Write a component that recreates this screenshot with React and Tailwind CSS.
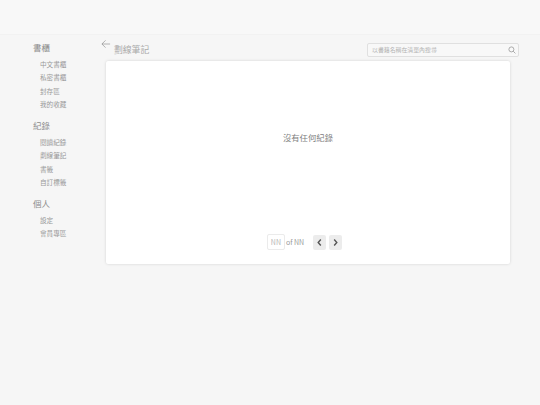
const font = { fontFamily: '"Noto Sans CJK TC", "Noto Sans", sans-serif' };

const sections = [
  { title: '書櫃', items: ['中文書櫃', '私密書櫃', '封存區', '我的收藏'] },
  { title: '紀錄', items: ['閱讀紀錄', '劃線筆記', '書籤', '自訂標籤'] },
  { title: '個人', items: ['設定', '會員專區'] },
];

const Sidebar = () => (
  <aside className="w-[101px] shrink-0 pl-[33px] pt-[5px]">
    {sections.map((section) => (
      <div key={section.title} className="mb-[6.4px]">
        <h2 className="h-[15px] text-[8.5px] leading-[15px] font-normal text-[#8c8c8c]">{section.title}</h2>
        <ul className="mt-[3px] pl-[7px]">
          {section.items.map((item) => (
            <li key={item} className="h-[13.4px] text-[6.6px] leading-[13.4px] font-normal text-[#999]">{item}</li>
          ))}
        </ul>
      </div>
    ))}
  </aside>
);

const Pager = () => (
  <div className="flex items-center justify-center pr-[7px]">
    <div className="flex h-[16px] w-[18px] items-center justify-center rounded-[2px] border border-[#ebebeb] bg-white text-[7px] text-[#b5b5b5]">NN</div>
    <span className="ml-[1px] text-[7px] text-[#999]">of NN</span>
    <button className="ml-[9px] flex h-[15px] w-[13px] items-center justify-center rounded-[2px] bg-[#ececec]">
      <svg width="7" height="9" viewBox="0 0 7 9" fill="none" stroke="#555" strokeWidth="1.4"><path d="M4.8 1.5 L2.2 4.5 L4.8 7.5" /></svg>
    </button>
    <button className="ml-[3px] flex h-[15px] w-[13px] items-center justify-center rounded-[2px] bg-[#ececec]">
      <svg width="7" height="9" viewBox="0 0 7 9" fill="none" stroke="#555" strokeWidth="1.4"><path d="M2.2 1.5 L4.8 4.5 L2.2 7.5" /></svg>
    </button>
  </div>
);

export default function App() {
  return (
    <div className="min-h-[405px] bg-[#f6f6f6]" style={font}>
      <header className="h-[35px] border-b border-[#f2f2f2] bg-[#f8f8f8]" />
      <div className="flex">
        <Sidebar />
        <main className="w-[418px] shrink-0">
          <div className="flex h-[26px] items-start">
            <svg className="mt-[4px]" width="10" height="10" viewBox="0 0 11 11" fill="none" stroke="#888" strokeWidth="0.7">
              <path d="M10 5.5 H1 M5 1.5 L1 5.5 L5 9.5" />
            </svg>
            <h1 className="ml-[3px] mt-[8px] text-[8.8px] leading-[14px] font-normal text-[#aaa]">劃線筆記</h1>
            <div className="ml-auto mt-[8px] flex h-[14px] w-[152px] items-center justify-between rounded-[2px] border border-[#e0e0e0] bg-[#f8f8f8] pl-[4px] pr-[2px]">
              <span className="text-[5.9px] text-[#b3b3b3]">以書籍名稱在清單內搜尋</span>
              <svg width="8" height="8" viewBox="0 0 8 8" fill="none" stroke="#999" strokeWidth="0.8">
                <circle cx="3.4" cy="3.4" r="2.5" />
                <path d="M5.2 5.2 L7.4 7.4" />
              </svg>
            </div>
          </div>
          <section className="ml-[5px] flex h-[203px] w-[404px] flex-col rounded-[2px] bg-white pb-[14px] shadow-[0_0_3px_rgba(0,0,0,0.15)]">
            <div className="flex flex-1 items-center justify-center pb-[20px] text-[8.4px] text-[#808080]">沒有任何紀錄</div>
            <Pager />
          </section>
        </main>
      </div>
    </div>
  );
}
